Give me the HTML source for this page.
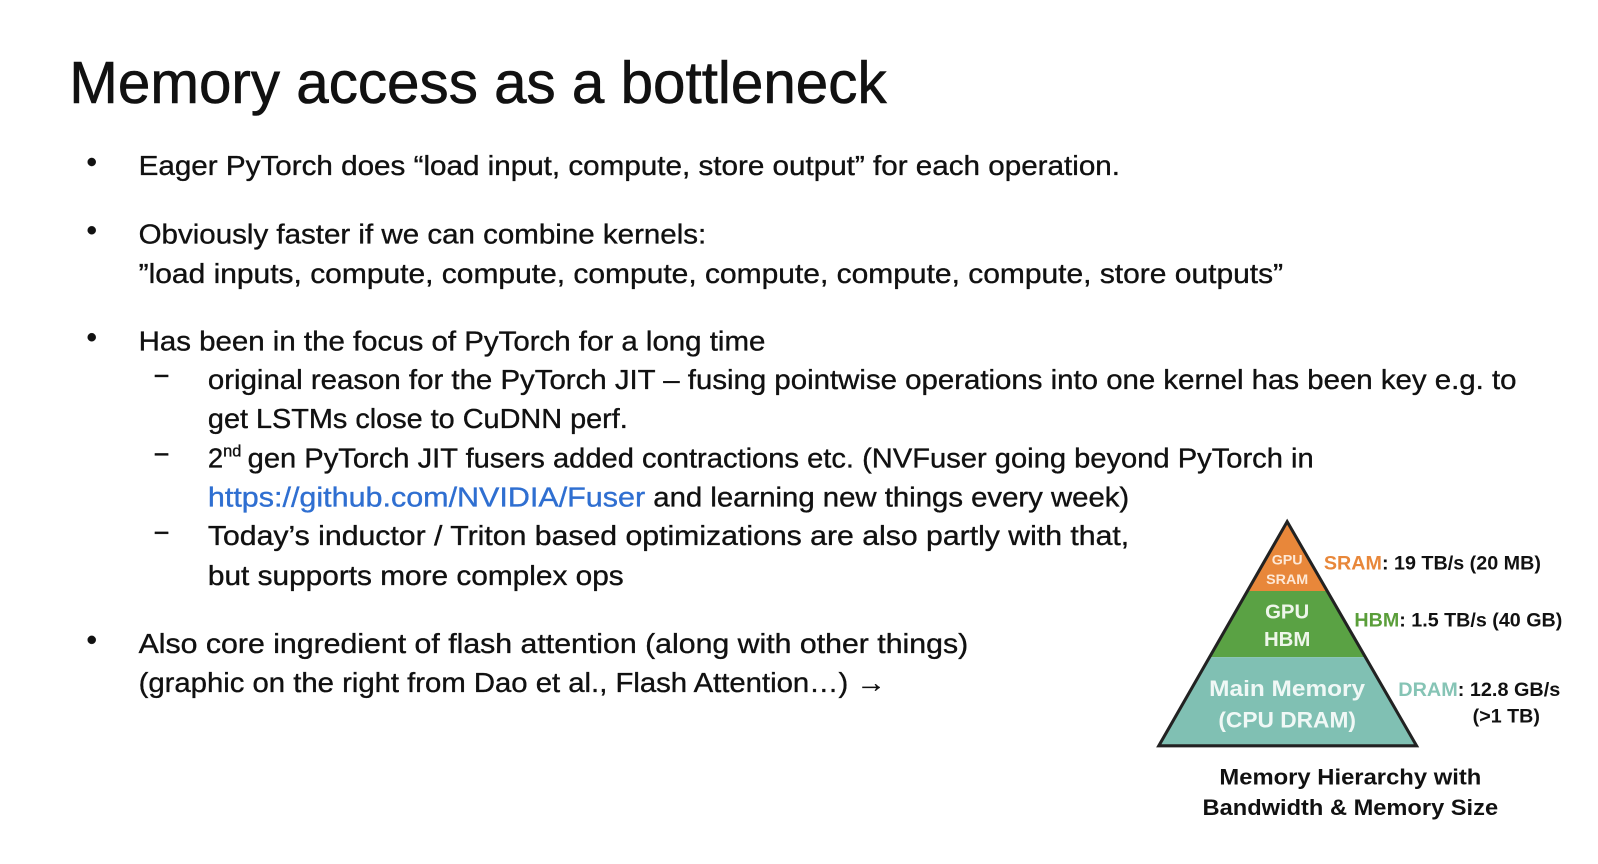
<!DOCTYPE html>
<html><head><meta charset="utf-8"><style>
html,body{margin:0;padding:0;background:#fff;width:1598px;height:864px;overflow:hidden}
svg{display:block}
text{font-family:"Liberation Sans",sans-serif;fill:#111}
</style></head><body>
<svg width="1598" height="864" viewBox="0 0 1568 848" preserveAspectRatio="none" xmlns="http://www.w3.org/2000/svg">
<text x="68" y="101" font-size="58" textLength="802" lengthAdjust="spacingAndGlyphs" stroke="#111" stroke-width="0.6">Memory access as a bottleneck</text>
<g font-size="27" stroke="#111" stroke-width="0.35">
<circle cx="90" cy="159" r="4" fill="#111"/>
<text x="136" y="172" textLength="963" lengthAdjust="spacingAndGlyphs">Eager PyTorch does “load input, compute, store output” for each operation.</text>
<circle cx="90" cy="226" r="4" fill="#111"/>
<text x="136" y="239" textLength="557" lengthAdjust="spacingAndGlyphs">Obviously faster if we can combine kernels:</text>
<text x="136" y="278" textLength="1123" lengthAdjust="spacingAndGlyphs">”load inputs, compute, compute, compute, compute, compute, compute, store outputs”</text>
<circle cx="90" cy="331" r="4" fill="#111"/>
<text x="136" y="344" textLength="615" lengthAdjust="spacingAndGlyphs">Has been in the focus of PyTorch for a long time</text>
<rect x="152" y="368" width="13" height="2" fill="#111"/>
<text x="204" y="382" textLength="1284" lengthAdjust="spacingAndGlyphs">original reason for the PyTorch JIT – fusing pointwise operations into one kernel has been key e.g. to</text>
<text x="204" y="420" textLength="412" lengthAdjust="spacingAndGlyphs">get LSTMs close to CuDNN perf.</text>
<rect x="152" y="445" width="13" height="2" fill="#111"/>
<text x="204" y="459">2</text><text x="219" y="448" font-size="16">nd</text>
<text x="243" y="459" textLength="1046" lengthAdjust="spacingAndGlyphs">gen PyTorch JIT fusers added contractions etc. (NVFuser going beyond PyTorch in</text>
<text x="204" y="497" style="fill:#2f6fd1;stroke:#2f6fd1" textLength="429" lengthAdjust="spacingAndGlyphs">https://github.com/NVIDIA/Fuser</text>
<text x="641" y="497" textLength="467" lengthAdjust="spacingAndGlyphs">and learning new things every week)</text>
<rect x="152" y="522" width="13" height="2" fill="#111"/>
<text x="204" y="535" textLength="904" lengthAdjust="spacingAndGlyphs">Today’s inductor / Triton based optimizations are also partly with that,</text>
<text x="204" y="574" textLength="408" lengthAdjust="spacingAndGlyphs">but supports more complex ops</text>
<circle cx="90" cy="628" r="4" fill="#111"/>
<text x="136" y="641" textLength="814" lengthAdjust="spacingAndGlyphs">Also core ingredient of flash attention (along with other things)</text>
<text x="136" y="679" textLength="733" lengthAdjust="spacingAndGlyphs">(graphic on the right from Dao et al., Flash Attention…) →</text>
</g>
<polygon points="1263,512 1302,580 1224,580" fill="#e8873a"/>
<polygon points="1224,580 1302,580 1340,645 1187,645" fill="#5aa244"/>
<polygon points="1187,645 1340,645 1390,732 1137,732" fill="#80c0b3"/>
<polygon points="1263,512 1390,732 1137,732" fill="none" stroke="#222" stroke-width="3"/>
<g style="font-weight:bold" text-anchor="middle">
<text x="1263" y="554" font-size="14" style="fill:#fde8d6">GPU</text>
<text x="1263" y="573" font-size="14" style="fill:#fde8d6">SRAM</text>
<text x="1263" y="607" font-size="20" style="fill:#eef6ea">GPU</text>
<text x="1263" y="634" font-size="20" style="fill:#eef6ea">HBM</text>
<text x="1263" y="683" font-size="22" style="fill:#f0f8f6" textLength="153" lengthAdjust="spacingAndGlyphs">Main Memory</text>
<text x="1263" y="714" font-size="22" style="fill:#f0f8f6" textLength="135" lengthAdjust="spacingAndGlyphs">(CPU DRAM)</text>
</g>
<g font-size="19" style="font-weight:bold">
<text x="1299" y="559" textLength="213" lengthAdjust="spacingAndGlyphs"><tspan style="fill:#e8873a">SRAM</tspan>: 19 TB/s (20 MB)</text>
<text x="1329" y="615" textLength="204" lengthAdjust="spacingAndGlyphs"><tspan style="fill:#5a9e3a">HBM</tspan>: 1.5 TB/s (40 GB)</text>
<text x="1372" y="683" textLength="159" lengthAdjust="spacingAndGlyphs"><tspan style="fill:#86c4b5">DRAM</tspan>: 12.8 GB/s</text>
<text x="1445" y="709" textLength="66" lengthAdjust="spacingAndGlyphs">(&gt;1 TB)</text>
</g>
<g font-size="22" text-anchor="middle" style="font-weight:bold">
<text x="1325" y="770" textLength="257" lengthAdjust="spacingAndGlyphs">Memory Hierarchy with</text>
<text x="1325" y="800" textLength="290" lengthAdjust="spacingAndGlyphs">Bandwidth &amp; Memory Size</text>
</g>
</svg>
</body></html>
